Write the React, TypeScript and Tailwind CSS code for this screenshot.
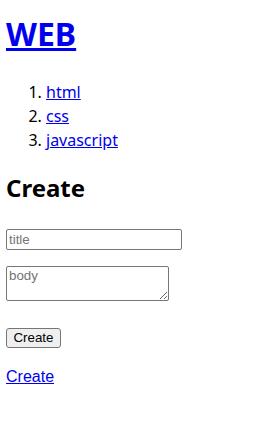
import React from 'react';

const App: React.FC = () => {
  const topics = ['html', 'css', 'javascript'];

  return (
    <div className="min-h-screen bg-white px-[6px] font-['Noto_Sans',sans-serif] text-black">
      <div className="flex flex-col items-start">
        <h1 className="mt-[12px] text-[32px] font-bold leading-[43.6px]">
          <a href="#" className="text-[#0000ee] underline">WEB</a>
        </h1>

        <ol className="mt-[24px] list-decimal pl-[40px] text-[16px] leading-[24px]">
          {topics.map(t => (
            <li key={t}>
              <a href="#" className="text-[#0000ee] underline">{t}</a>
            </li>
          ))}
        </ol>

        <h2 className="mt-[20px] text-[24px] font-bold leading-[32.7px]">Create</h2>

        <form className="flex flex-col items-start" onSubmit={e => e.preventDefault()}>
          <input
            type="text"
            placeholder="title"
            className="mt-[25px] h-[21px] w-[176px] rounded-[2px] border border-[#767676] px-[2px] font-['Liberation_Sans',sans-serif] text-[13.33px] placeholder:text-[#757575]"
          />
          <textarea
            placeholder="body"
            className="mt-[16px] h-[35px] w-[163px] rounded-[2px] border border-[#767676] px-[2px] py-[1px] font-['Liberation_Sans',sans-serif] text-[13.33px] leading-[16px] placeholder:text-[#757575]"
          />
          <button
            type="submit"
            className="mt-[27px] h-[20px] w-[55px] rounded-[3px] border border-[#767676] bg-[#efefef] font-['Liberation_Sans',sans-serif] text-[13.33px] leading-[16px] text-black"
          >
            Create
          </button>
        </form>

        <a href="#" className="mt-[20px] font-['Liberation_Sans',sans-serif] text-[16px] leading-[18.4px] text-[#0000ee] underline">
          Create
        </a>
      </div>
    </div>
  );
};

export default App;
